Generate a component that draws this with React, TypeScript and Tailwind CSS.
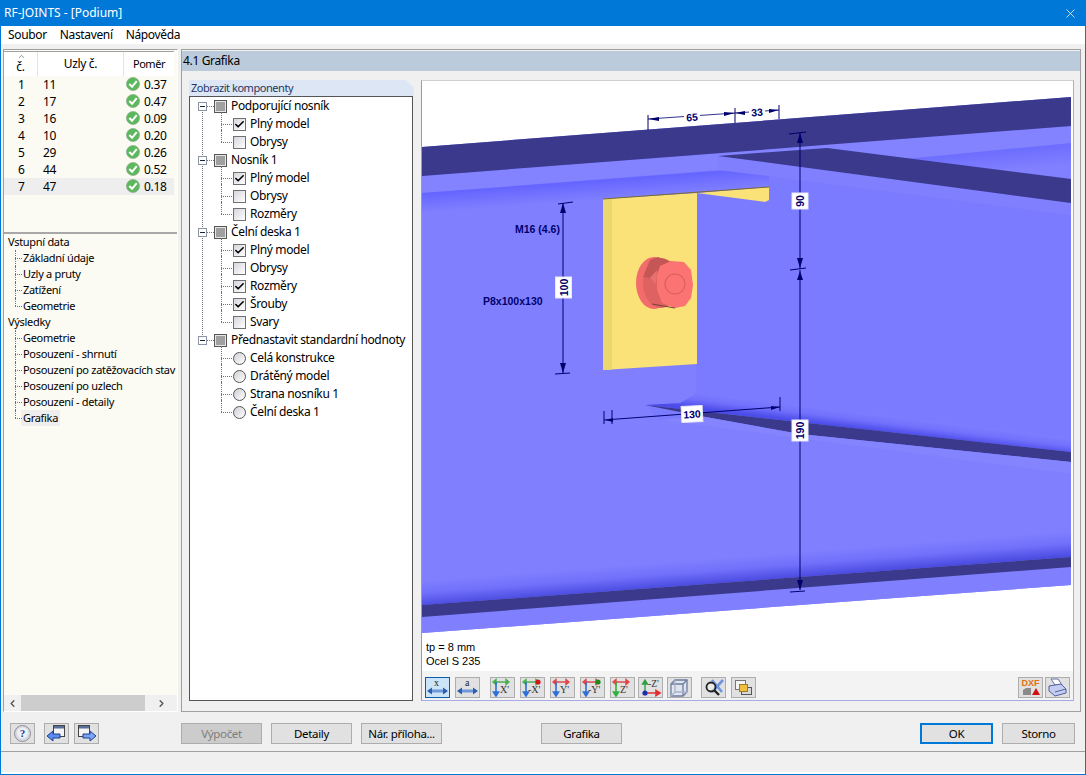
import { ReactNode } from 'react';
import { Check, ChevronLeft, ChevronRight, ChevronUp, X } from 'lucide-react';

const results = [
  ['1', '11', '0.37'],
  ['2', '17', '0.47'],
  ['3', '16', '0.09'],
  ['4', '10', '0.20'],
  ['5', '29', '0.26'],
  ['6', '44', '0.52'],
  ['7', '47', '0.18'],
];

type TreeItem = { label: string; kind: 'check' | 'radio'; on?: boolean };
const tree: { label: string; items: TreeItem[] }[] = [
  {
    label: 'Podporující nosník',
    items: [
      { label: 'Plný model', kind: 'check', on: true },
      { label: 'Obrysy', kind: 'check' },
    ],
  },
  {
    label: 'Nosník 1',
    items: [
      { label: 'Plný model', kind: 'check', on: true },
      { label: 'Obrysy', kind: 'check' },
      { label: 'Rozměry', kind: 'check' },
    ],
  },
  {
    label: 'Čelní deska 1',
    items: [
      { label: 'Plný model', kind: 'check', on: true },
      { label: 'Obrysy', kind: 'check' },
      { label: 'Rozměry', kind: 'check', on: true },
      { label: 'Šrouby', kind: 'check', on: true },
      { label: 'Svary', kind: 'check' },
    ],
  },
  {
    label: 'Přednastavit standardní hodnoty',
    items: [
      { label: 'Celá konstrukce', kind: 'radio' },
      { label: 'Drátěný model', kind: 'radio' },
      { label: 'Strana nosníku 1', kind: 'radio' },
      { label: 'Čelní deska 1', kind: 'radio' },
    ],
  },
];

function NavGroup({ title, items, active }: { title: string; items: string[]; active?: string }) {
  return (
    <div className="text-[11px] tracking-[-0.3px]">
      <div className="h-4 leading-4 pl-1">{title}</div>
      {items.map((t, i) => (
        <div key={t} className="relative h-4 leading-4 pl-[19px] whitespace-nowrap">
          <span className={`absolute left-[11px] top-0 border-l border-dotted border-gray-500 ${i === items.length - 1 ? 'h-2' : 'h-4'}`} />
          <span className="absolute left-[11px] top-2 w-[7px] border-t border-dotted border-gray-500" />
          <span className={t === active ? 'bg-[#eeeeee] block w-fit -ml-0.5 px-0.5' : ''}>{t}</span>
        </div>
      ))}
    </div>
  );
}

function TreeBox({ on }: { on?: boolean }) {
  return (
    <span className="w-[13px] h-[13px] shrink-0 border border-[#707070] bg-gradient-to-br from-[#d6d6de] to-white flex items-center justify-center">
      {on && <Check size={11} strokeWidth={3.5} className="text-black" />}
    </span>
  );
}

function TreeRadio() {
  return <span className="w-[13px] h-[13px] shrink-0 rounded-full border border-[#555] bg-gradient-to-br from-[#d0d0d6] to-white" />;
}

function ComponentTree() {
  return (
    <div>
      {tree.map((group, gi) => (
        <div key={group.label} className="relative">
          {gi < tree.length - 1 && (
            <span className="absolute left-[12px] top-3 bottom-[-8px] border-l border-dotted border-gray-500" />
          )}
          <div className="relative h-[18px] flex items-center pl-[8px]">
            <span className="relative z-10 w-[9px] h-[9px] border border-[#8a94a4] bg-white flex items-center justify-center">
              <span className="w-[5px] h-px bg-[#223]" />
            </span>
            <span className="w-[7px] border-t border-dotted border-gray-500" />
            <span className="w-[13px] h-[13px] border border-[#555] bg-[#e6e6e6] flex items-center justify-center">
              <span className="w-[9px] h-[9px] bg-[#a0a0a0]" />
            </span>
            <span className="ml-[4px] whitespace-nowrap">{group.label}</span>
          </div>
          {group.items.map((item, i) => (
            <div key={item.label} className="relative h-[18px] flex items-center pl-[43px]">
              <span
                className={`absolute left-[31px] top-[-3px] border-l border-dotted border-gray-500 ${i === group.items.length - 1 ? 'h-3' : 'h-[18px]'}`}
              />
              <span className="absolute left-[31px] top-[9px] w-[11px] border-t border-dotted border-gray-500" />
              {item.kind === 'check' ? <TreeBox on={item.on} /> : <TreeRadio />}
              <span className="ml-[4px] whitespace-nowrap">{item.label}</span>
            </div>
          ))}
        </div>
      ))}
    </div>
  );
}

function ToolBtn({ children, active, className = '' }: { children: ReactNode; active?: boolean; className?: string }) {
  return (
    <span
      className={`w-[25px] h-[21px] shrink-0 border flex items-center justify-center ${
        active ? 'border-[#0a5ea8] bg-[#cce4f7]' : 'border-[#adadad] bg-[#e1e1e1]'
      } ${className}`}
    >
      {children}
    </span>
  );
}

function AxisIcon({ label, h, v, dot }: { label: string; h: string; v: string; dot?: string }) {
  return (
    <svg width="23" height="19" viewBox="0 0 23 19" className="tracking-normal">
      <path d="M3 4h14M18 4l-3-2.500v5zM2 4l3-2.500v5z" stroke={h} fill={h} strokeWidth="1.400" />
      <path d="M5 4v12M5 18l-2.500-4h5z" stroke={v} fill={v} strokeWidth="1.600" />
      {dot && <circle cx="17" cy="4" r="2.600" fill={dot} />}
      <text x={label.length > 2 ? 7 : 9} y="15" fontSize="10" fontFamily="'Liberation Serif', serif" fill="#333">
        {label}
      </text>
    </svg>
  );
}

function Toolbar() {
  return (
    <div className="h-[29px] flex items-start pt-[6px] pl-[3px] pr-[3px] bg-[#f3f3f3] shrink-0">
      <ToolBtn active>
        <svg width="23" height="19" viewBox="0 0 23 19" className="tracking-normal">
          <text x="8" y="8" fontSize="10" fontFamily="'Liberation Serif', serif" fill="#222">x</text>
          <path d="M3 13h17" stroke="#6f97dc" strokeWidth="3" />
          <path d="M1 13l5-3.500v7zM22 13l-5-3.500v7z" fill="#2b5fb0" />
        </svg>
      </ToolBtn>
      <ToolBtn className="ml-[5px]">
        <svg width="23" height="19" viewBox="0 0 23 19" className="tracking-normal">
          <text x="9" y="8" fontSize="10" fontFamily="'Liberation Serif', serif" fill="#222">a</text>
          <path d="M3 13h17" stroke="#6f97dc" strokeWidth="3" />
          <path d="M1 13l5-3.500v7zM22 13l-5-3.500v7z" fill="#2b5fb0" />
        </svg>
      </ToolBtn>
      <ToolBtn className="ml-[10px]"><AxisIcon label="X'" h="#4caf50" v="#2f6fd8" /></ToolBtn>
      <ToolBtn className="ml-[5px]"><AxisIcon label="-X'" h="#4caf50" v="#2f6fd8" dot="#d01818" /></ToolBtn>
      <ToolBtn className="ml-[5px]"><AxisIcon label="Y'" h="#e04848" v="#2f6fd8" /></ToolBtn>
      <ToolBtn className="ml-[5px]"><AxisIcon label="-Y'" h="#e04848" v="#2f6fd8" dot="#1a8a1a" /></ToolBtn>
      <ToolBtn className="ml-[5px]"><AxisIcon label="Z'" h="#e04848" v="#30b040" /></ToolBtn>
      <ToolBtn className="ml-[3px]">
        <svg width="23" height="19" viewBox="0 0 23 19" className="tracking-normal">
          <path d="M6 15V4M6 2L3.500 6h5z" stroke="#30a040" fill="#30a040" strokeWidth="1.400" />
          <path d="M6 15h13M21 15l-4-2.500v5z" stroke="#e03030" fill="#e03030" strokeWidth="1.600" />
          <circle cx="6" cy="15" r="2.600" fill="#1a30b0" />
          <text x="9" y="9" fontSize="9.500" fontFamily="'Liberation Serif', serif" fill="#333">-Z'</text>
        </svg>
      </ToolBtn>
      <ToolBtn className="ml-[4px]">
        <svg width="21" height="19" viewBox="0 0 21 19" fill="none" stroke="#6d7c9c" strokeWidth="1.300">
          <path d="M6 2h12v12l-4 4H2V6z" fill="#dfe4f0" />
          <path d="M2 6h12v12M14 6l4-4" />
          <path d="M6 2v12l-4 4M6 14h12" stroke="#a8b2c8" />
        </svg>
      </ToolBtn>
      <ToolBtn className="ml-[9px]">
        <svg width="23" height="19" viewBox="0 0 23 19" fill="none">
          <path d="M10 2l10 12M21 2l-11 12" stroke="#6f95e0" strokeWidth="2.600" />
          <circle cx="9" cy="9" r="4.500" stroke="#222" strokeWidth="1.800" fill="#f4f4f4" fillOpacity="0.5" />
          <path d="M12 12l5 5" stroke="#222" strokeWidth="2.400" />
        </svg>
      </ToolBtn>
      <ToolBtn className="ml-[5px]">
        <svg width="21" height="19" viewBox="0 0 21 19">
          <rect x="8.500" y="9.500" width="10" height="7" fill="#d8d8d8" stroke="#555" />
          <rect x="2.500" y="2.500" width="10" height="9" fill="#f4f4f4" stroke="#777" />
          <rect x="6.500" y="6.500" width="8" height="7" fill="#f0c040" stroke="#a07a20" />
        </svg>
      </ToolBtn>
      <div className="flex-1" />
      <ToolBtn>
        <svg width="23" height="19" viewBox="0 0 23 19" className="tracking-normal">
          <text x="2.500" y="8" fontSize="9" fontWeight="700" fontFamily="'Liberation Sans', sans-serif" fill="#e07010">DXF</text>
          <path d="M4 12l3-2h5v7H4z" fill="#8a8a8a" />
          <path d="M17 10l4 7h-8z" fill="#d01010" />
        </svg>
      </ToolBtn>
      <ToolBtn className="ml-[2px]">
        <svg width="21" height="19" viewBox="0 0 21 19">
          <path d="M4 1h7l4 6H8z" fill="#fff" stroke="#6070a8" />
          <path d="M2 8l12-2 5 5v4l-11 3-6-5z" fill="#c4ccf0" stroke="#5060a0" />
          <path d="M8 14l11-3" stroke="#5060a0" />
        </svg>
      </ToolBtn>
    </div>
  );
}

function Dim({ x, y, text, vertical, rotate = 0, plain }: { x: number; y: number; text: string; vertical?: boolean; rotate?: number; plain?: boolean }) {
  const w = text.length > 2 ? 21 : 16;
  const h = 16;
  return (
    <g transform={`translate(${x} ${y}) rotate(${vertical ? -90 : rotate})`}>
      <rect x={-w / 2} y={-h / 2} width={w} height={h} fill="#fff" stroke={plain ? 'none' : '#e8e8f8'} strokeWidth="1" />
      <text x="0" y="4" textAnchor="middle" fontSize="10.500" fontWeight="700" fontFamily="'Liberation Sans', sans-serif" fill="#00006e">
        {text}
      </text>
    </g>
  );
}

function BeamDrawing() {
  const dim = '#00006e';
  return (
    <svg viewBox="422 81 649 552" className="block w-[649px] h-[552px] shrink-0 tracking-normal">
      <defs>
        <linearGradient id="topShade" gradientUnits="userSpaceOnUse" x1="500" y1="187" x2="501.400" y2="206">
          <stop offset="0" stopColor="#6464ff" />
          <stop offset="1" stopColor="#7e7eff" />
        </linearGradient>
        <linearGradient id="rightShade" gradientUnits="userSpaceOnUse" x1="1000" y1="149" x2="1002" y2="172">
          <stop offset="0" stopColor="#6c6cff" />
          <stop offset="1" stopColor="#8181ff" />
        </linearGradient>
        <linearGradient id="midShade" gradientUnits="userSpaceOnUse" x1="850" y1="411" x2="848" y2="427">
          <stop offset="0" stopColor="#7d7dff" />
          <stop offset="0.5" stopColor="#7070fc" />
          <stop offset="1" stopColor="#4c4cea" />
        </linearGradient>
        <linearGradient id="lowShade" gradientUnits="userSpaceOnUse" x1="800" y1="551" x2="802" y2="577">
          <stop offset="0" stopColor="#8080ff" />
          <stop offset="0.5" stopColor="#7070fb" />
          <stop offset="1" stopColor="#4a4ae0" />
        </linearGradient>
      </defs>

      {/* web */}
      <polygon points="422,147 1071,97 1071,585 422,633" fill="#7b7bff" />
      <path d="M422 213L603 199V370L696 364V385Q696 402 680 403L645 405L660 420L1071 474V585L422 633Z" fill="#8080ff" />

      {/* top flange of the carrying beam */}
      <polygon points="422,176 1071,126 1071,179 827,148 718,156 718,170 422,193" fill="#8383ff" />
      <polygon points="905,159 1071,143 1071,179 980,168" fill="url(#rightShade)" />
      <polygon points="422,193 769,167 769,186 422,213" fill="url(#topShade)" />
      <polygon points="718,156 1071,203 1071,215 769,176 718,170" fill="#8080ff" />
      <polygon points="422,147 1071,97 1071,126 422,176" fill="#3a398b" />
      <polygon points="718,156 827,148 1071,179 1071,203" fill="#3a398b" />

      {/* lower flange of the joining beam */}
      <polygon points="697,393 1071,438 1071,452 645,405 680,403" fill="url(#midShade)" />
      <polygon points="645,405 1071,452 1071,462 800,434 700,416" fill="#3a398b" />
      <polygon points="660,420 700,416 800,434 1071,462 1071,474" fill="#8484ff" />

      {/* bottom flange */}
      <polygon points="422,580 1071,530 1071,557 422,605" fill="url(#lowShade)" />
      <polygon points="422,605 1071,557 1071,567 422,617" fill="#3a398b" />

      {/* end plate */}
      <polygon points="603,199 697,193 697,364 603,370" fill="#fae278" />
      <polygon points="603,199 612,198.500 612,369.500 603,370" fill="#ecd76f" />
      <polygon points="697,193 769,187 769,200 765,202" fill="#fae278" />
      <path d="M603 199L769 187" stroke="#7a6a30" strokeWidth="1" fill="none" />

      {/* bolt */}
      <ellipse cx="654" cy="283" rx="18" ry="26" fill="#f26c6c" />
      <ellipse cx="661" cy="283" rx="18" ry="25" fill="#de6262" />
      <polygon points="643,277 650,278 672,262 658,257 650,260" fill="#c45656" />
      <polygon points="650,278 656,284 657,270" fill="#e87070" />
      <polygon points="671,261 684,262 691,270 693,285 691,298 685,306 675,308 662,303 657,290 657,275 660,266" fill="#fc7373" />
      <circle cx="675" cy="284" r="10" fill="#fc7373" stroke="#d86060" strokeWidth="1.200" />
      <path d="M652 304l23 4" stroke="#7a4038" strokeWidth="1" />

      {/* dimensions */}
      <g stroke={dim} fill="none" strokeWidth="1">
        <path d="M648 115v15M735 108v15M779 105v14" />
        <path d="M648 119L779 110" strokeOpacity="0.8" />
        <path d="M789 134L806 132M800 133V269M790 270L806 268M800 270V590M790 592L805 591" />
        <path d="M558 204L573 202M563 203V373M555 374L570 373" />
        <path d="M604 411v13M612 410v14M780 397v14M604 420L780 407" />
      </g>
      <g fill={dim}>
        <path d="M648 119l11 -2v4zM735 113l-11 -1v4zM735 113l10 -2v4zM779 110l-10 -1v4z" />
        <path d="M800 133l-3 10h6zM800 268l-3 -10h6zM800 271l-3 9h6zM800 590l-3 -10h6z" />
        <path d="M563 203l-3 10h6zM563 373l-3 -10h6z" />
        <path d="M605 420l8 -2v4zM780 407l-9 -1v4z" />
        <text x="515" y="233" fontSize="10.500" fontWeight="700" fontFamily="'Liberation Sans', sans-serif">M16 (4.6)</text>
        <text x="483" y="305" fontSize="10.500" fontWeight="700" fontFamily="'Liberation Sans', sans-serif">P8x100x130</text>
      </g>
      <Dim x={692} y={117} text="65" rotate={-4} plain />
      <Dim x={757} y={112} text="33" rotate={-4} plain />
      <Dim x={800} y={201} text="90" vertical />
      <Dim x={563.500} y={287.500} text="100" vertical />
      <Dim x={692} y={414} text="130" rotate={-3} />
      <Dim x={800} y={430.500} text="190" vertical />
    </svg>
  );
}

function Btn({ children, w, className = '' }: { children: ReactNode; w: string; className?: string }) {
  return (
    <div className={`h-[21px] border border-[#adadad] bg-[#e1e1e1] flex items-center justify-center text-[11.500px] ${w} ${className}`}>
      {children}
    </div>
  );
}

function BottomBar() {
  return (
    <div className="h-[38px] flex items-center pl-[9px] pr-[10px] pt-[3px] shrink-0">
      <Btn w="w-[25px]">
        <svg width="19" height="19" viewBox="0 0 19 19" className="tracking-normal">
          <circle cx="9.500" cy="9.500" r="8" fill="#d8d8de" stroke="#8d8d9c" />
          <circle cx="9.500" cy="9" r="5.500" fill="#eef0f8" />
          <text x="9.500" y="13" textAnchor="middle" fontSize="11" fontWeight="700" fontFamily="'Liberation Serif', serif" fill="#1f3a93">?</text>
        </svg>
      </Btn>
      <Btn w="w-[25px]" className="ml-[9px]">
        <svg width="21" height="19" viewBox="0 0 21 19">
          <rect x="7.500" y="1.500" width="11" height="11" fill="#f4f4f4" stroke="#444" />
          <rect x="8" y="2" width="10" height="2.500" fill="#5b6f98" />
          <path d="M1 12l6-5v3h7v4H7v3z" fill="#5b8df0" stroke="#1d3f92" />
        </svg>
      </Btn>
      <Btn w="w-[25px]" className="ml-[5px]">
        <svg width="21" height="19" viewBox="0 0 21 19">
          <rect x="2.500" y="1.500" width="11" height="11" fill="#f4f4f4" stroke="#444" />
          <rect x="3" y="2" width="10" height="2.500" fill="#5b6f98" />
          <path d="M20 12l-6-5v3H7v4h7v3z" fill="#7aa4f4" stroke="#1d3f92" />
        </svg>
      </Btn>
      <Btn w="w-[81px]" className="ml-[82px] !bg-[#cccccc] text-[#7d7d7d]">Výpočet</Btn>
      <Btn w="w-[81px]" className="ml-[9px]">Detaily</Btn>
      <Btn w="w-[81px]" className="ml-[9px]">Nár. příloha...</Btn>
      <Btn w="w-[81px]" className="ml-[99px]">Grafika</Btn>
      <div className="flex-1" />
      <Btn w="w-[73px]" className="border-2 !border-[#0078d7]">OK</Btn>
      <Btn w="w-[73px]" className="ml-[9px]">Storno</Btn>
    </div>
  );
}

export default function App() {
  return (
    <div className="w-[1086px] h-[775px] flex flex-col bg-[#f0f0f0] border border-t-0 border-[#0078d7] text-[12px] leading-4 tracking-[-0.35px] text-black font-['Noto_Sans','Open_Sans',sans-serif] overflow-hidden">
      {/* title bar */}
      <div className="h-[26px] bg-[#0078d7] text-white flex items-center justify-between shrink-0 pl-[3px] tracking-normal">
        <span>RF-JOINTS - [Podium]</span>
        <X size={15} strokeWidth={1.2} className="mr-[7px]" />
      </div>
      {/* menu */}
      <div className="h-[18px] bg-white flex items-center pl-[7px] gap-[13px] shrink-0">
        <span>Soubor</span>
        <span>Nastavení</span>
        <span>Nápověda</span>
      </div>

      <div className="flex flex-1 min-h-0 pt-[5px] pl-[2px] pr-[4px]">
        {/* left column */}
        <div className="w-[175px] shrink-0 flex flex-col border border-[#a0a0a0] border-r-white border-b-white mb-[1px]">
          <div className="h-[182px] bg-[#fbfaf3] shrink-0 pr-[3px]">
            <div className="relative h-[25px] bg-white flex items-center border-t border-[#a0a0a0] mt-px">
              <ChevronUp size={9} className="absolute left-[13px] top-[0px] text-gray-500" />
              <span className="w-[34px] text-center pt-[8px] leading-[14px] border-r border-[#e5e5e5] h-full">č.</span>
              <span className="w-[86px] text-center leading-[24px] border-r border-[#e5e5e5] h-full">Uzly č.</span>
              <span className="flex-1 text-center leading-[24px] h-full text-[11px] tracking-[-0.45px]">Poměr</span>
            </div>
            {results.map(([n, nodes, ratio]) => (
              <div key={n} className={`h-[17px] flex items-center ${n === '7' ? 'bg-[#eeeeee]' : ''}`}>
                <span className="w-[37px] pl-[14px]">{n}</span>
                <span className="w-[85px] pl-[2px]">{nodes}</span>
                <svg width="14" height="14" viewBox="0 0 15 15" className="shrink-0 -mt-[1px]">
                  <circle cx="7.500" cy="7.500" r="7" fill="#5cb85c" stroke="#8fb08f" strokeWidth="0.8" />
                  <path d="M3.500 7.500l3 3 5-6" stroke="#fff" strokeWidth="2.200" fill="none" />
                </svg>
                <span className="ml-[4px]">{ratio}</span>
              </div>
            ))}
          </div>
          <div className="flex-1 min-h-0 bg-[#fbfaf3] border-t-2 border-[#a8a8a8] flex flex-col">
            <div className="flex-1 overflow-hidden">
              <NavGroup title="Vstupní data" items={['Základní údaje', 'Uzly a pruty', 'Zatížení', 'Geometrie']} />
              <NavGroup
                title="Výsledky"
                items={['Geometrie', 'Posouzení - shrnutí', 'Posouzení po zatěžovacích stav', 'Posouzení po uzlech', 'Posouzení - detaily', 'Grafika']}
                active="Grafika"
              />
            </div>
            <div className="h-[16px] bg-[#f0f0f0] flex items-center shrink-0">
              <span className="w-[17px] flex justify-center">
                <ChevronLeft size={11} strokeWidth={3} className="text-[#555]" />
              </span>
              <span className="w-[124px] h-full bg-[#cdcdcd]" />
              <span className="flex-1 flex justify-center">
                <ChevronRight size={11} strokeWidth={3} className="text-[#555]" />
              </span>
            </div>
          </div>
        </div>

        {/* right panel */}
        <div className="ml-[3px] flex-1 min-w-0 flex flex-col border border-[#a0a0a0] mb-[1px]">
          <div className="h-5 mt-px bg-[#bccbdb] pl-[1px] leading-5 shrink-0">4.1 Grafika</div>
          <div className="flex-1 min-h-0 flex pl-[7px] pt-[9px] pr-[6px] pb-[10px] bg-[#f0f0f0]">
            <div className="w-[225px] shrink-0 flex flex-col">
              <div className="h-[16px] bg-[#dce6f4] [clip-path:polygon(0_0,calc(100%-8px)_0,100%_8px,100%_100%,0_100%)] text-[#1f3864] pl-[2px] leading-[16px] text-[11px] tracking-[-0.45px] shrink-0">
                Zobrazit komponenty
              </div>
              <div className="flex-1 min-h-0 bg-white border border-[#555] mr-[1px]">
                <ComponentTree />
              </div>
            </div>
            <div className="ml-[7px] flex-1 min-w-0 flex flex-col border border-[#a9a9e8] border-t-[#d0d0d0] border-l-[#9c9c9c] bg-white">
              <BeamDrawing />
              <div className="flex-1 min-h-0 bg-white pl-[4px] pt-[7px] text-[11px] leading-[14px] tracking-normal font-['Liberation_Sans',sans-serif]">
                <div>tp = 8 mm</div>
                <div>Ocel S 235</div>
              </div>
              <Toolbar />
            </div>
          </div>
        </div>
      </div>

      <BottomBar />
      <div className="h-[23px] border-t border-[#a0a0a0] border-b-2 border-b-white shrink-0" />
    </div>
  );
}
